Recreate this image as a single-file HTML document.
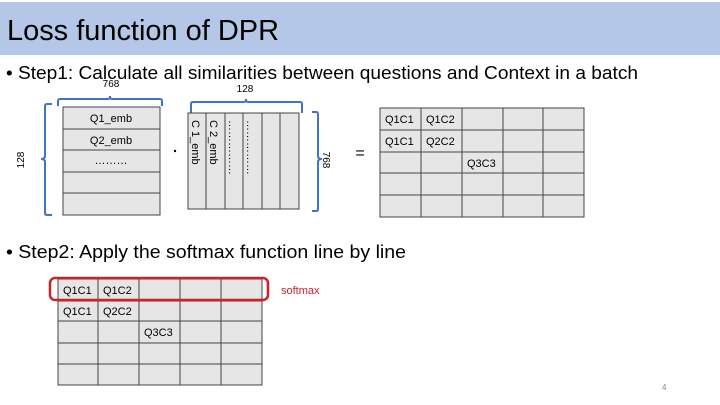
<!DOCTYPE html>
<html><head><meta charset="utf-8"><style>
html,body{margin:0;padding:0;background:#fff;}
svg{display:block;font-family:"Liberation Sans",sans-serif;}
</style></head><body>
<svg width="720" height="405" viewBox="0 0 720 405" xmlns="http://www.w3.org/2000/svg">
<rect x="0" y="2" width="720" height="53" fill="#b4c7e7"/>
<text x="7" y="40" font-size="29" fill="#000" textLength="272" lengthAdjust="spacingAndGlyphs">Loss function of DPR</text>
<text x="6" y="79" font-size="18" fill="#000" textLength="632" lengthAdjust="spacingAndGlyphs">• Step1: Calculate all similarities between questions and Context in a batch</text>
<text x="6" y="258" font-size="18" fill="#000" textLength="400" lengthAdjust="spacingAndGlyphs">• Step2: Apply the softmax function line by line</text>

<!-- left matrix -->
<g stroke="#444" stroke-width="1" fill="#e6e6e6">
<rect x="63" y="107" width="97" height="108"/>
<line x1="63" y1="129" x2="160" y2="129"/><line x1="63" y1="150" x2="160" y2="150"/>
<line x1="63" y1="172" x2="160" y2="172"/><line x1="63" y1="193" x2="160" y2="193"/>
</g>
<g font-size="11" text-anchor="middle" fill="#000">
<text x="111" y="122">Q1_emb</text><text x="111" y="144">Q2_emb</text><text x="111" y="164">………</text>
<text x="111" y="87" font-size="10">768</text>
<text x="245" y="92" font-size="10">128</text>
</g>
<g fill="none" stroke="#4472c4" stroke-width="2">
<path d="M58 106 V101 Q58 99 60 99 H108 Q110 99 110 96 Q110 99 112 99 H160 Q162 99 162 101 V106"/>
<path d="M191 113 V104 Q191 102 193 102 H244 Q246 102 246 99 Q246 102 248 102 H300 Q302 102 302 104 V113"/>
<path d="M52 104 H47 Q45 104 45 106 V156 Q45 159 41 159 Q45 159 45 162 V213 Q45 215 47 215 H52"/>
<path d="M312 112 H316 Q318 112 318 114 V156 Q318 159 322 159 Q318 159 318 162 V209 Q318 211 316 211 H312"/>
</g>
<text x="0" y="0" font-size="10" transform="translate(24,160) rotate(-90)" text-anchor="middle">128</text>
<text x="0" y="0" font-size="10" transform="translate(323,160) rotate(90)" text-anchor="middle">768</text>
<circle cx="175" cy="151" r="1.2" fill="#000"/>
<text x="360" y="158" font-size="16" text-anchor="middle">=</text>

<!-- right matrix -->
<g stroke="#444" stroke-width="1" fill="#e6e6e6">
<rect x="188" y="113" width="111" height="96"/>
<line x1="206" y1="113" x2="206" y2="209"/><line x1="225" y1="113" x2="225" y2="209"/>
<line x1="243" y1="113" x2="243" y2="209"/><line x1="262" y1="113" x2="262" y2="209"/>
<line x1="280" y1="113" x2="280" y2="209"/>
</g>
<g font-size="11" fill="#000">
<text transform="translate(192,120) rotate(90)">C 1_emb</text>
<text transform="translate(210,120) rotate(90)">C 2_emb</text>
<text transform="translate(229,120) rotate(90)">……………</text>
<text transform="translate(247,120) rotate(90)">……………</text>
</g>

<!-- result matrix -->
<g stroke="#444" stroke-width="1" fill="#e6e6e6">
<rect x="380" y="108" width="204" height="109"/>
<line x1="421" y1="108" x2="421" y2="217"/><line x1="462" y1="108" x2="462" y2="217"/>
<line x1="503" y1="108" x2="503" y2="217"/><line x1="543" y1="108" x2="543" y2="217"/>
<line x1="380" y1="130" x2="584" y2="130"/><line x1="380" y1="152" x2="584" y2="152"/>
<line x1="380" y1="173" x2="584" y2="173"/><line x1="380" y1="195" x2="584" y2="195"/>
</g>
<g font-size="11" fill="#000">
<text x="385" y="123">Q1C1</text><text x="426" y="123">Q1C2</text>
<text x="385" y="145">Q1C1</text><text x="426" y="145">Q2C2</text>
<text x="467" y="167">Q3C3</text>
</g>

<!-- bottom matrix -->
<g stroke="#444" stroke-width="1" fill="#e6e6e6">
<rect x="58" y="279" width="204" height="106"/>
<line x1="98" y1="279" x2="98" y2="385"/><line x1="139" y1="279" x2="139" y2="385"/>
<line x1="180" y1="279" x2="180" y2="385"/><line x1="221" y1="279" x2="221" y2="385"/>
<line x1="58" y1="301" x2="262" y2="301"/><line x1="58" y1="321" x2="262" y2="321"/>
<line x1="58" y1="343" x2="262" y2="343"/><line x1="58" y1="364" x2="262" y2="364"/>
</g>
<g font-size="11" fill="#000">
<text x="63" y="294">Q1C1</text><text x="103" y="294">Q1C2</text>
<text x="63" y="315">Q1C1</text><text x="103" y="315">Q2C2</text>
<text x="144" y="336">Q3C3</text>
</g>
<rect x="50" y="278" width="218" height="22" rx="5" fill="none" stroke="#d0202a" stroke-width="2.5"/>
<text x="281" y="294" font-size="11" fill="#d0202a">softmax</text>
<text x="662" y="390" font-size="8" fill="#888">4</text>
</svg>
</body></html>
